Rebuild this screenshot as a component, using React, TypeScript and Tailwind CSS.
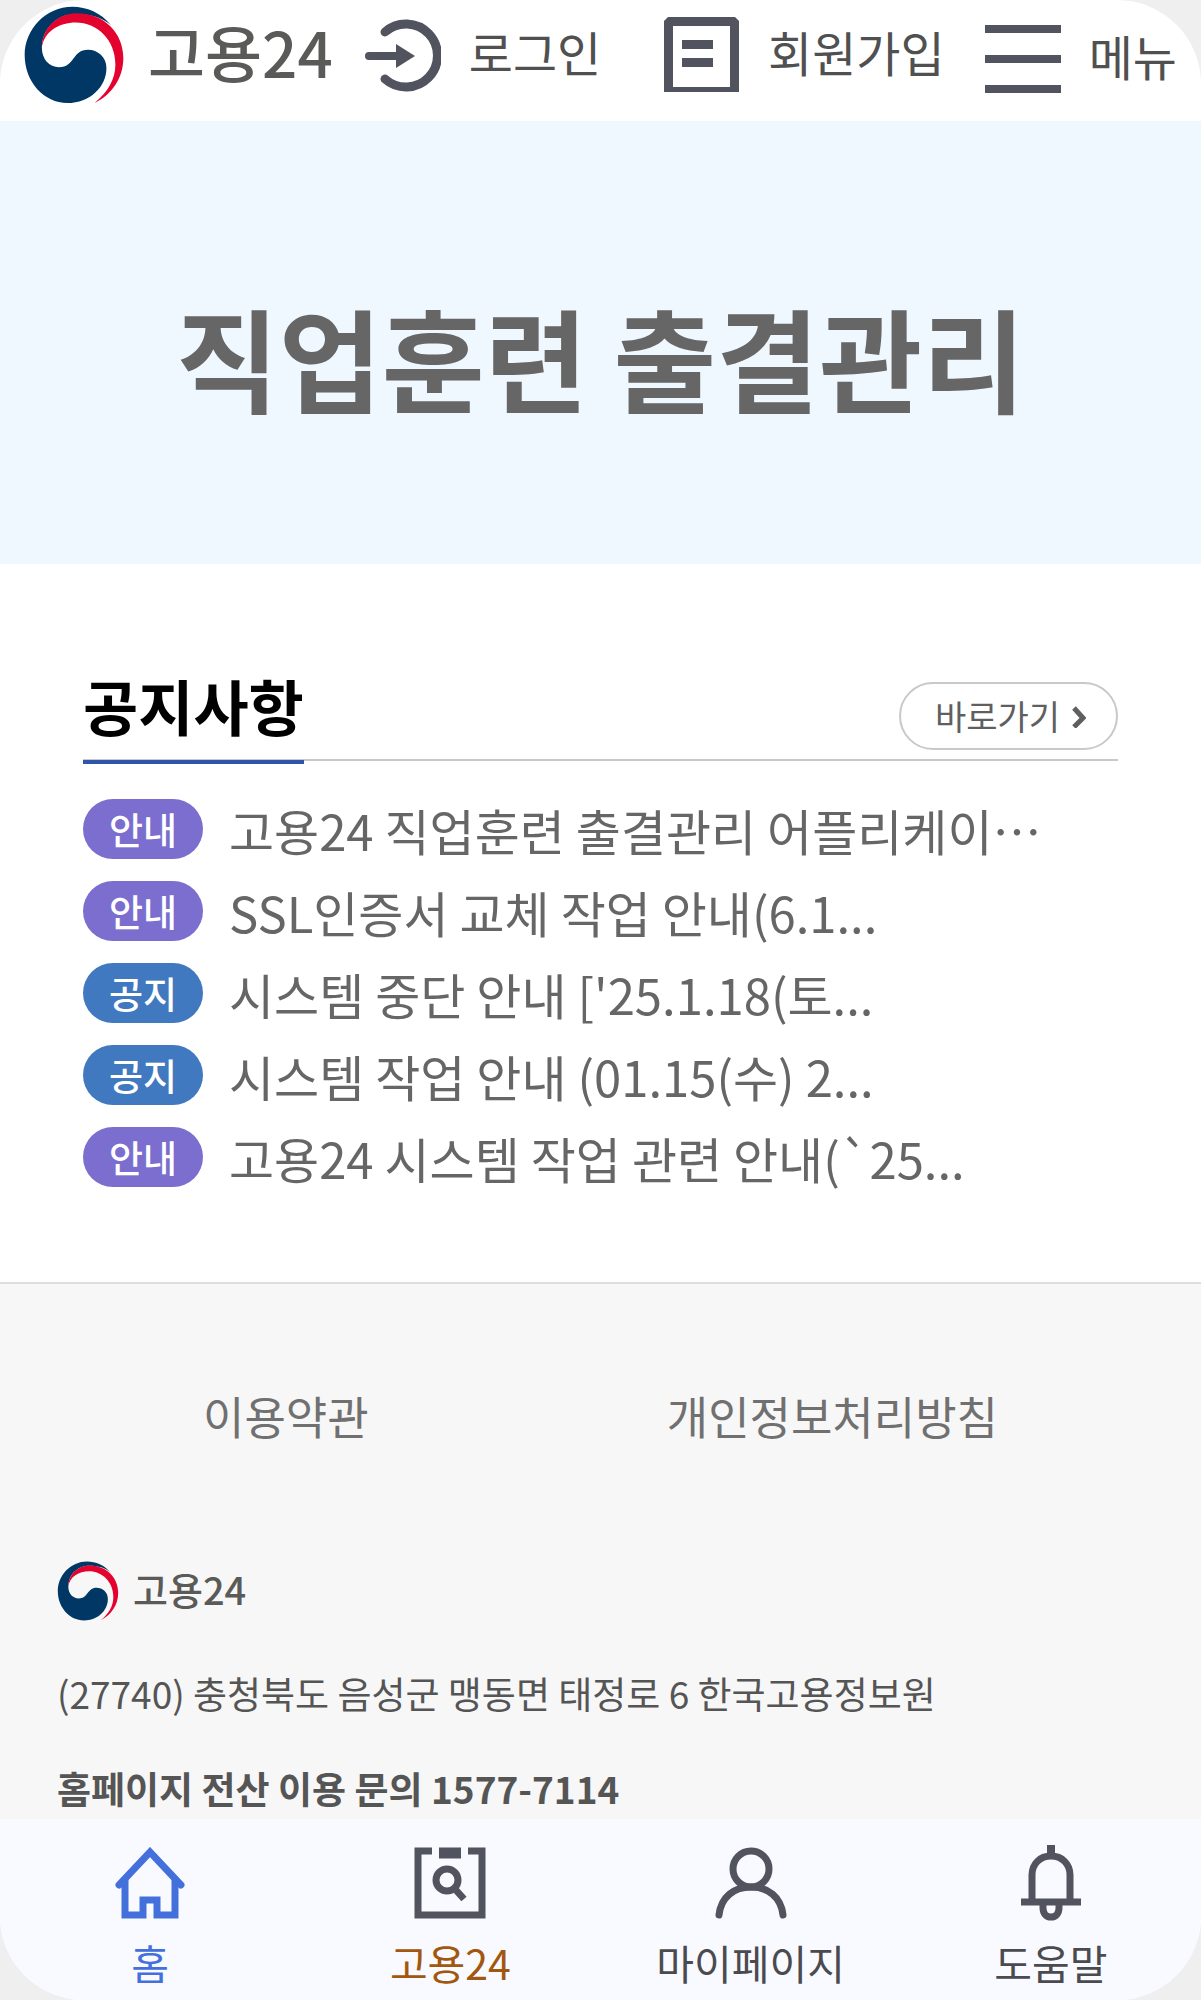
import React from "react";

type Notice = { kind: "안내" | "공지"; title: string };

const notices: Notice[] = [
  { kind: "안내", title: "고용24 직업훈련 출결관리 어플리케이…" },
  { kind: "안내", title: "SSL인증서 교체 작업 안내(6.1..." },
  { kind: "공지", title: "시스템 중단 안내 ['25.1.18(토..." },
  { kind: "공지", title: "시스템 작업 안내 (01.15(수) 2..." },
  { kind: "안내", title: "고용24 시스템 작업 관련 안내(`25..." },
];

function Emblem({ className }: { className: string }) {
  return (
    <svg viewBox="70 18 300 296" className={className} aria-hidden="true">
      <path
        fill="#003764"
        d="M332 76C302 38 258 20 215 20C135 20 71 88 71 166C71 248 130 311 200 311C268 311 318 262 318 205C318 172 292 150 262 150C215 150 222 203 175 203C145 203 123 178 123 145C123 90 165 42 225 42C270 42 305 52 332 76Z"
      />
      <path
        fill="#e4032e"
        d="M123 143C124 85 170 40 228 40C312 40 369 100 369 175C369 235 335 285 282 311C322 278 345 240 345 195C345 120 290 68 225 68C175 68 130 95 123 143Z"
      />
    </svg>
  );
}

function LoginIcon() {
  return (
    <svg viewBox="0 0 76 76" className="size-[76px] shrink-0" fill="none" stroke="#51535e" aria-hidden="true">
      <path d="M20 15A31.500 31.500 0 1 1 20 62" strokeWidth="9" strokeLinecap="round" />
      <path d="M4 39H34" strokeWidth="8" strokeLinecap="round" />
      <path d="M31 27L50 39L31 51Z" fill="#51535e" stroke="none" />
    </svg>
  );
}

function JoinIcon() {
  return (
    <svg viewBox="0 0 76 76" className="size-[76px] shrink-0" aria-hidden="true">
      <path
        fill="#51535e"
        fillRule="evenodd"
        d="M4 0H71L75 4V75H0V4ZM9 9V70H66V9Z"
      />
      <path fill="#51535e" d="M18 23H49V32H18ZM18 41H49V50H18Z" />
    </svg>
  );
}

function MenuIcon() {
  return (
    <svg viewBox="0 0 76 76" className="size-[76px] shrink-0" aria-hidden="true">
      <path fill="#51535e" d="M0 8H76V16H0ZM0 38H76V46H0ZM0 68H76V76H0Z" />
    </svg>
  );
}

function HomeIcon() {
  return (
    <svg viewBox="0 0 72 72" className="size-[72px]" fill="none" stroke="#4470dc" strokeWidth="7" aria-hidden="true">
      <path d="M5 38L36 5L67 38" strokeLinecap="round" />
      <path d="M11 32V68H29V53H43V68H61V32" />
    </svg>
  );
}

function SearchDocIcon() {
  return (
    <svg viewBox="0 0 72 72" className="size-[72px]" fill="none" stroke="#51535e" strokeWidth="7" aria-hidden="true">
      <path d="M18 4H4V68H68V4H54" />
      <path d="M25 6H47" strokeWidth="11" />
      <circle cx="33" cy="33" r="11" />
      <path d="M40 41L50 52" />
    </svg>
  );
}

function UserIcon() {
  return (
    <svg viewBox="0 0 72 72" className="size-[72px]" fill="none" stroke="#51535e" strokeWidth="7" aria-hidden="true">
      <circle cx="36" cy="22" r="18" />
      <path d="M4 68C6 50 19 40 36 40S66 50 68 68" strokeLinecap="round" />
    </svg>
  );
}

function BellIcon() {
  return (
    <svg viewBox="0 0 72 72" className="size-[72px] overflow-visible" fill="none" stroke="#51535e" strokeWidth="7" aria-hidden="true">
      <path d="M36 -2V9" strokeWidth="8" />
      <path d="M17 54V28C17 17 25 9 36 9S55 17 55 28V54" />
      <path d="M6 55H66" />
      <path d="M28 56V61C28 66 31 70 36 70S44 66 44 61V56" />
    </svg>
  );
}

const tabs = [
  { label: "홈", icon: HomeIcon, color: "text-[#4470dc]" },
  { label: "고용24", icon: SearchDocIcon, color: "text-[#a1570f]" },
  { label: "마이페이지", icon: UserIcon, color: "text-[#4b4b4f]" },
  { label: "도움말", icon: BellIcon, color: "text-[#4b4b4f]" },
];

export default function App() {
  return (
    <div className="min-h-screen bg-[#efefef] font-['Noto_Sans_CJK_KR',sans-serif] whitespace-nowrap">
      <div className="flex min-h-screen flex-col overflow-hidden rounded-[84px] bg-white">
        <header className="flex h-[121px] items-center px-6 pb-3 text-[48px] leading-none text-[#505050]">
          <a href="#home" className="flex items-center gap-6">
            <Emblem className="h-[98px] w-[100px]" />
            <span className="pb-2 text-[62px] font-medium text-[#5a5a58]">고용24</span>
          </a>
          <a href="#login" className="ml-8 flex items-center gap-7">
            <LoginIcon />
            <span className="pb-2">로그인</span>
          </a>
          <a href="#join" className="ml-auto flex items-center gap-7">
            <JoinIcon />
            <span className="pb-2">회원가입</span>
          </a>
          <button type="button" className="ml-10 flex items-center gap-7">
            <MenuIcon />
            <span>메뉴</span>
          </button>
        </header>

        <section className="flex h-[443px] items-center justify-center bg-[#f0f8ff] pt-[26px]">
          <h1 className="text-[112px] leading-none font-bold text-[#666]">직업훈련 출결관리</h1>
        </section>

        <main className="px-[83px] pt-[100px] pb-[95px]">
          <div className="flex h-[97px] items-start justify-between border-b-2 border-[#c9c9c9]">
            <h2 className="h-[100px] border-b-4 border-[#2f55a8] text-[60px] leading-[82px] font-bold text-black">
              공지사항
            </h2>
            <a
              href="#notices"
              className="mt-[18px] flex h-[68px] items-center gap-3 rounded-full border-2 border-[#c9c9c9] pr-[30px] pl-[34px] text-[34px] leading-none text-[#5f5f5f]"
            >
              바로가기
              <svg viewBox="0 0 14 24" className="h-6 w-3.5" fill="none" stroke="#5f5f5f" strokeWidth="5" aria-hidden="true">
                <path d="M2 4L11 14L2 23" />
              </svg>
            </a>
          </div>
          <ul className="mt-[38px] flex flex-col gap-[22px]">
            {notices.map((n) => (
              <li key={n.title}>
                <a href="#notice" className="flex h-[60px] items-center gap-[26px]">
                  <span
                    className={
                      n.kind === "안내"
                        ? "flex h-[60px] w-[120px] items-center justify-center rounded-full bg-[#7b6ecf] text-[37px] leading-none font-medium text-white"
                        : "flex h-[60px] w-[120px] items-center justify-center rounded-full bg-[#4079bf] text-[37px] leading-none font-medium text-white"
                    }
                  >
                    {n.kind}
                  </span>
                  <span className="text-[49px] leading-none text-[#666]">{n.title}</span>
                </a>
              </li>
            ))}
          </ul>
        </main>

        <footer className="flex-1 border-t-2 border-[#dedede] bg-[#f7f7f7] text-[#555]">
          <div className="flex justify-around px-[54px] pt-[100px] text-[45px] leading-[64px] text-[#707070]">
            <a href="#terms">이용약관</a>
            <a href="#privacy">개인정보처리방침</a>
          </div>
          <div className="px-[57px] pt-[113px]">
            <div className="flex h-[60px] items-center gap-3.5">
              <Emblem className="h-[60px] w-[62px]" />
              <span className="pb-1 text-[38px] leading-none font-medium text-[#5a5a58]">고용24</span>
            </div>
            <p className="mt-[46px] text-[37px] leading-[52px]">
              (27740) 충청북도 음성군 맹동면 태정로 6 한국고용정보원
            </p>
            <p className="mt-[43px] text-[37px] leading-[52px] font-bold">홈페이지 전산 이용 문의 1577-7114</p>
          </div>
        </footer>

        <nav className="grid h-[181px] grid-cols-4 bg-[#f9faff] pt-7">
          {tabs.map(({ label, icon: Icon, color }) => (
            <a key={label} href="#tab" className="flex flex-col items-center">
              <Icon />
              <span className={color + " mt-4 text-[41px] leading-[54px]"}>{label}</span>
            </a>
          ))}
        </nav>
      </div>
    </div>
  );
}
